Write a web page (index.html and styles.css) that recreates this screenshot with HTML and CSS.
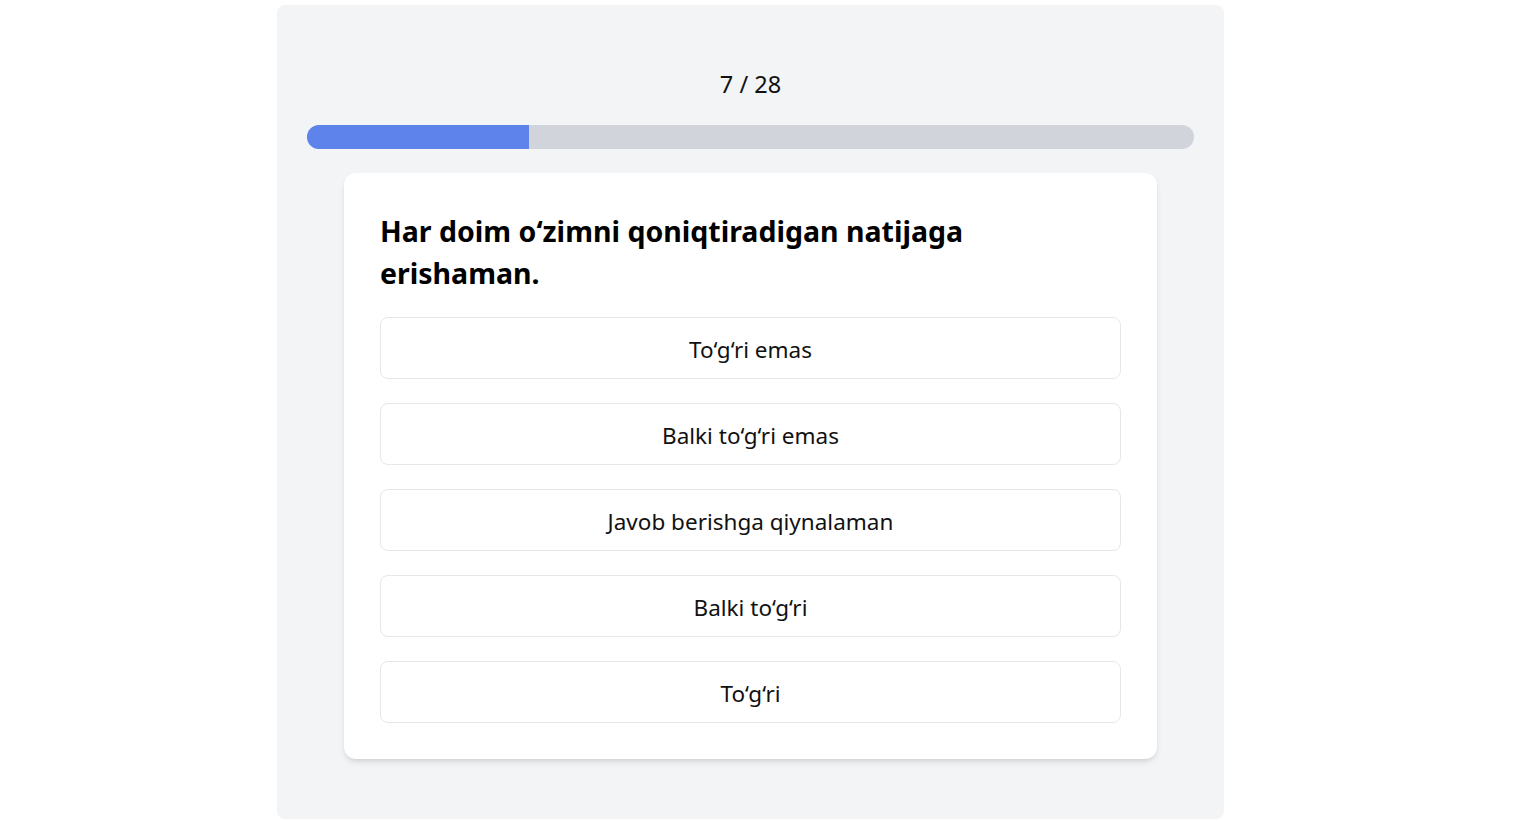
FILE: index.html
```html
<!DOCTYPE html>
<html>
  <head>
    <meta name="viewport" content="width=device-width,initial-scale=1.0">
    <title>Test - Savol 7</title>
    <link rel="stylesheet" href="styles.css">
  </head>
  <body>
    <div class="page">
      <div class="quiz">
        <div id="counter" class="counter">7 / 28</div>
        <div class="progress">
          <div id="progress-fill" class="progress-fill" style="width: 25%"></div>
        </div>

        <div class="question-card">
          <h2 id="question" class="question">Har doim o‘zimni qoniqtiradigan natijaga erishaman.</h2>
          <div class="answers">
            <button class="answer">To‘g‘ri emas</button>
            <button class="answer">Balki to‘g‘ri emas</button>
            <button class="answer">Javob berishga qiynalaman</button>
            <button class="answer">Balki to‘g‘ri</button>
            <button class="answer">To‘g‘ri</button>
          </div>
        </div>
      </div>
    </div>
  </body>
</html>
```

FILE: styles.css
```css
body {
  margin: 0;
  padding: 0;
  background: #fff;
  font-family: 'Noto Sans', 'Open Sans', sans-serif;
  color: #000;
}

.page {
  padding: 5px 20px 0 0;
}

.quiz {
  max-width: 947px;
  margin: 0 auto;
  padding: 30px 30px 60px;
  box-sizing: border-box;
  background: #f3f4f6;
  border-radius: 8px;
}

.counter {
  padding-top: 33px;
  text-align: center;
  font-size: 23.5px;
  line-height: 32px;
  color: #111;
}

.progress {
  margin-top: 25px;
  height: 24px;
  background: #d1d5db;
  border-radius: 12px;
  overflow: hidden;
}

.progress-fill {
  height: 100%;
  background: #5e84ec;
}

.question-card {
  max-width: 813px;
  margin: 24px auto 0;
  padding: 37px 36px 36px;
  box-sizing: border-box;
  background: #fff;
  border-radius: 12px;
  box-shadow: 0 4px 6px -1px rgba(0, 0, 0, 0.1), 0 2px 4px -2px rgba(0, 0, 0, 0.1);
}

.question {
  max-width: 640px;
  margin: 0 0 23px;
  font-size: 28.5px;
  line-height: 42px;
  font-weight: 700;
}

.answers {
  display: flex;
  flex-direction: column;
  gap: 24px;
}

.answer {
  height: 62px;
  padding-top: 3px;
  background: #fff;
  border: 1px solid #e5e7eb;
  border-radius: 8px;
  font-family: inherit;
  font-size: 22.5px;
  color: #111;
  cursor: pointer;
}
```
